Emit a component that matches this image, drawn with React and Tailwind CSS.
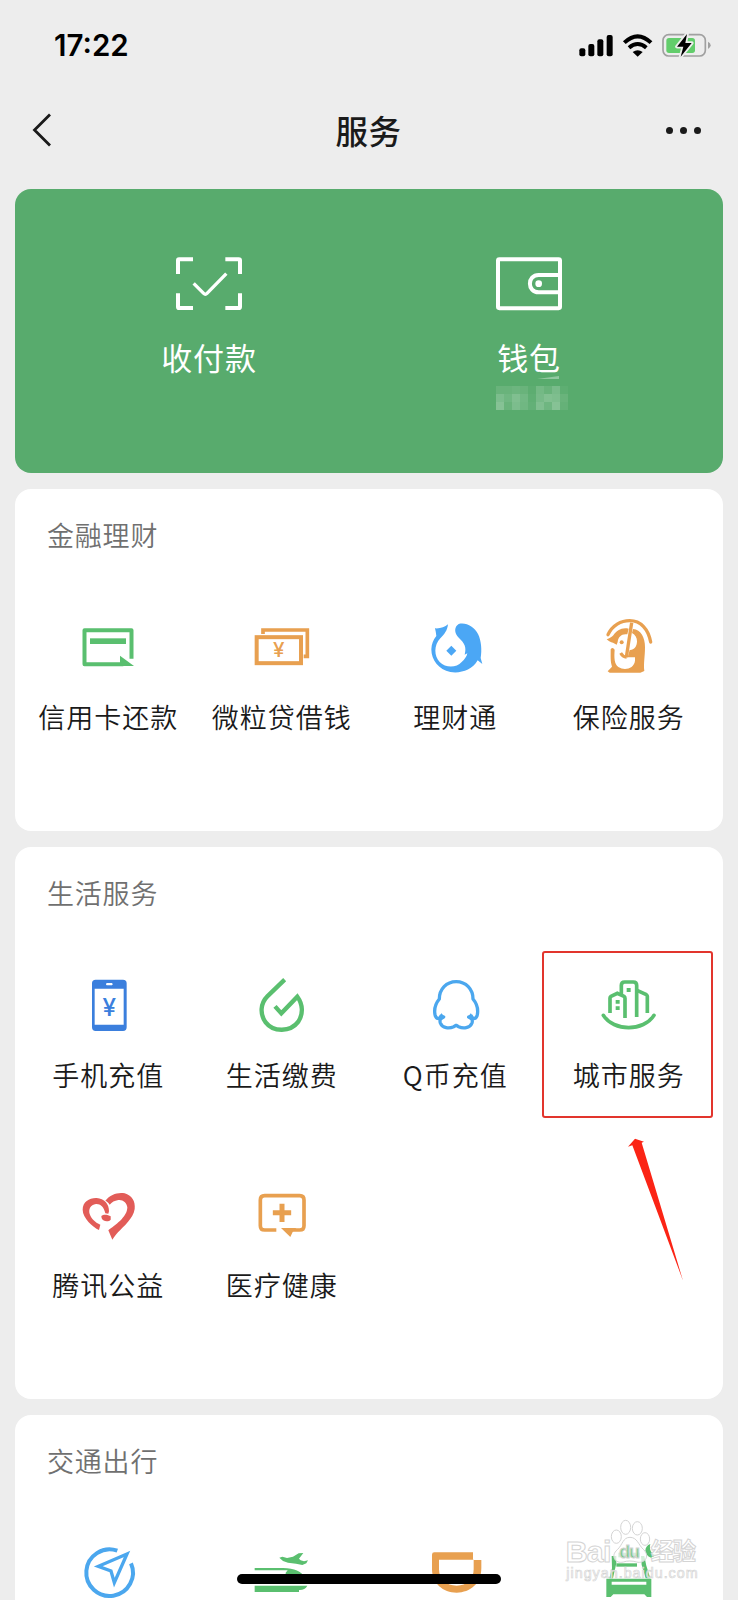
import React from 'react';

const cjk = "font-['Noto_Sans_CJK_SC',sans-serif]";

const GREEN = '#5abf6f';
const ORANGE = '#e8a050';
const BLUE = '#4ba7ee';

function Icon({ viewBox, children }) {
  return (
    <svg className="w-[60px] h-[60px]" viewBox={viewBox} fill="none">
      {children}
    </svg>
  );
}

const CreditCardIcon = () => (
  <Icon viewBox="237 441 180 180">
    <path d="M394.500 566V480.500H253.500V582.500H370" stroke={GREEN} strokeWidth="12" strokeLinejoin="round" />
    <path d="M360 557L402 588H360Z" fill={GREEN} />
    <rect x="270" y="505" width="108" height="17" fill={GREEN} />
  </Icon>
);

const LoanIcon = () => (
  <Icon viewBox="757 441 180 180">
    <path d="M790 492V480H923V559H912" stroke={ORANGE} strokeWidth="11" />
    <rect x="771" y="501.500" width="133" height="78" stroke={ORANGE} strokeWidth="12" />
    <text x="837.500" y="561" textAnchor="middle" fontSize="62" fontWeight="500" fontFamily="Inter, sans-serif" fill={ORANGE}>¥</text>
  </Icon>
);

const WealthIcon = () => (
  <Icon viewBox="77 81 180 180">
    <path
      d="M104 115C120 116 133 112 143 103C141 122 132 133 120 145C100 166 101 198 118 216C136 234 168 234 184 216C193 208 199 200 201 190L193 194C199 172 193 160 176 144C160 129 162 110 175 102C197 96 222 110 233 132C243 152 245 180 241 204L246 222L232 211C215 241 180 251 150 246C115 239 93 210 93 178C94 162 98 150 108 138C107 130 106 122 104 115Z"
      fill="#4ba7f5"
    />
    <path d="M153 167L168 182L153 197L138 182Z" fill="#4ba7f5" />
  </Icon>
);

const InsuranceIcon = () => (
  <Icon viewBox="598 81 180 180">
    <path d="M625 134C638 106 664 92 690 92C724 92 746 118 753 156" stroke={ORANGE} strokeWidth="10" strokeLinecap="round" />
    <path
      d="M621 148C630 145 636 141 641 136C651 121 667 111 687 116L683 133C667 130 655 140 654 156L651 164L640 158C633 157 627 153 621 148Z"
      fill={ORANGE}
    />
    <circle cx="666" cy="157" r="6" fill={ORANGE} />
    <path d="M696 98L680 202" stroke={ORANGE} strokeWidth="10" />
    <path d="M663 189C667 197 674 201 681 202" stroke={ORANGE} strokeWidth="9" />
    <path
      d="M700 117C724 119 736 143 736 172C736 200 731 222 734 243L722 248H630L624 244L637 230C632 214 633 200 633 178Q639 170 645 179C643 204 644 222 656 231C675 243 703 236 706 212V202H684L690 180C703 181 712 170 712 154C712 143 707 134 697 129Z"
      fill={ORANGE}
    />
  </Icon>
);

const PhoneIcon = () => (
  <Icon viewBox="146 75 180 180">
    <path
      fillRule="evenodd"
      d="M196 89H278Q289 89 289 100V232Q289 243 278 243H196Q185 243 185 232V100Q185 89 196 89ZM193 116V224H280V116ZM229 99Q225 103 229 106H245Q249 103 245 99Z"
      fill="#3b7fdd"
    />
    <text x="237" y="199" textAnchor="middle" fontSize="73" fontWeight="500" fontFamily="Inter, sans-serif" fill="#3b7fdd">¥</text>
  </Icon>
);

const BillsIcon = () => (
  <Icon viewBox="667 75 180 180">
    <path
      d="M765 89L713 139C692 160 690 193 708 217C731 247 782 247 806 215C821 192 820 163 803 140L755 190L736 169"
      stroke={GREEN}
      strokeWidth="13"
    />
  </Icon>
);

const QCoinIcon = () => (
  <Icon viewBox="77 135 180 180">
    <path
      d="M167.500 155C138 155 117 178 117 207C107 219 101 238 104 254C107 268 117 269 122 258L130 261C120 266 117 270 120 279C126 295 147 296 160 290L167.500 286L175 290C188 296 209 295 215 279C218 270 215 266 205 261L213 258C218 269 228 268 231 254C234 238 228 219 218 207C218 178 197 155 167.500 155Z"
      stroke={BLUE}
      strokeWidth="10"
      strokeLinejoin="round"
    />
    <path d="M123 249L134 263L119 268ZM212 249L201 263L216 268Z" fill={BLUE} />
  </Icon>
);

const CityIcon = () => (
  <Icon viewBox="598 135 180 180">
    <g stroke={GREEN} strokeWidth="11">
      <path d="M631 249V204Q631 201 634 199L653 190L673 199Q676 201 676 205V264" />
      <path d="M665 194V166Q665 156 675 156H701Q711 156 711 166V261" />
      <path d="M712 181L740 194Q743 196 743 199V249" />
      <path d="M611 256C642 305 732 305 763 256" strokeLinecap="round" />
    </g>
    <path d="M648 210H660V221H648ZM648 229H660V240H648ZM681 174H693V186H681Z" fill={GREEN} />
  </Icon>
);

const CharityIcon = () => (
  <Icon viewBox="146 45 180 180">
    <path
      d="M210 164L206 180C187 171 157 144 157 119C157 95 178 83 199 84C222 86 236 101 236 124L234 131L225 130C221 110 209 101 197 102C180 104 174 118 178 132C184 148 196 158 210 164Z"
      fill="#e25c58"
    />
    <path
      d="M225 92C240 74 262 66 283 70C304 76 316 94 313 117C309 145 281 168 263 187C258 193 252 200 246 209L234 181C253 166 291 142 291 112C289 97 277 88 264 90C252 92 245 96 238 104C235 98 231 95 225 92Z"
      fill="#e25c58"
    />
    <path d="M213 138C220 132 233 134 241 139V149C236 155 226 155 219 151C215 148 213 143 213 138Z" fill="#e25c58" />
  </Icon>
);

const HealthIcon = () => (
  <Icon viewBox="667 45 180 180">
    <path
      d="M740 180H705Q692 180 692 167V90Q692 77 705 77H810Q823 77 823 90V167Q823 180 810 180H788"
      stroke={ORANGE}
      strokeWidth="11"
    />
    <path d="M754 174H800L789 186L782 201Z" fill={ORANGE} />
    <path d="M757 101V156M729.500 128.500H784.500" stroke={ORANGE} strokeWidth="15" />
  </Icon>
);

const TripIcon = () => (
  <Icon viewBox="239 489 180 180">
    <path d="M354 512A70 70 0 1 0 395 550" stroke={BLUE} strokeWidth="12" />
    <path d="M383 522L297 559L335 573L345 608Z" stroke={BLUE} strokeWidth="10" />
  </Icon>
);

const TrainPlaneIcon = () => (
  <Icon viewBox="757 489 180 180">
    <path
      d="M839 533L848 530L862 534L880 530L897 520L911 519L898 536L903 541L913 544L925 541L920 550L908 555L889 551L865 548L850 543Z"
      fill={GREEN}
    />
    <path d="M765 564H850C885 564 905 575 914 590H858V578L864 571H765Z" fill={GREEN} />
    <path d="M765 617H923C918 627 908 631 898 630V636H765Z" fill={GREEN} />
  </Icon>
);

const DidiIcon = () => (
  <Icon viewBox="77 129 180 180">
    <path
      d="M95 164Q95 157 102 157H218V180H243V205C243 250 210 278 169 278C128 278 95 250 95 208ZM116 179V208C116 238 138 257 169 257C200 257 220 238 220 208V179Z"
      fillRule="evenodd"
      fill={ORANGE}
    />
  </Icon>
);

const HotelIcon = () => (
  <Icon viewBox="598 129 180 180">
    <path d="M656 172V158H720V172Z" fill={GREEN} />
    <path d="M636 168H650V190L640 235H629L637 205ZM724 168H734L740 197L752 235H738L726 195Z" fill={GREEN} />
    <path d="M650 190H712V200H650Z" fill={GREEN} />
    <path d="M620 236H755V291H742L734 283H641L633 291H620Z" fill={GREEN} />
    <path d="M636 245H740V254H636Z" fill="#fff" />
    <path d="M752 132C732 138 732 166 754 173L768 166C754 160 748 148 752 132Z" fill={GREEN} />
  </Icon>
);

const sections = [
  {
    title: '金融理财',
    items: [
      { label: '信用卡还款', icon: CreditCardIcon },
      { label: '微粒贷借钱', icon: LoanIcon },
      { label: '理财通', icon: WealthIcon },
      { label: '保险服务', icon: InsuranceIcon },
    ],
  },
  {
    title: '生活服务',
    annotated: true,
    items: [
      { label: '手机充值', icon: PhoneIcon },
      { label: '生活缴费', icon: BillsIcon },
      { label: 'Q币充值', icon: QCoinIcon },
      { label: '城市服务', icon: CityIcon },
      { label: '腾讯公益', icon: CharityIcon },
      { label: '医疗健康', icon: HealthIcon },
    ],
  },
  {
    title: '交通出行',
    items: [
      { label: '', icon: TripIcon },
      { label: '', icon: TrainPlaneIcon },
      { label: '', icon: DidiIcon },
      { label: '', icon: HotelIcon },
    ],
  },
];

function StatusBar() {
  return (
    <div className="h-[92px] flex items-center justify-between pl-[54px] pr-[27px]">
      <span className="font-['Inter',sans-serif] font-semibold text-[29.5px] leading-none text-black">17:22</span>
      <svg className="w-[132px] h-[26px]" viewBox="116 68 396 78" fill="none">
        <g fill="#000">
          <rect x="117" y="114" width="18" height="24" rx="6" />
          <rect x="144" y="101" width="18" height="37" rx="6" />
          <rect x="171" y="87" width="18" height="51" rx="6" />
          <rect x="199" y="74" width="18" height="64" rx="6" />
          <path d="M277 125Q292 114 307 125L292 139Z" />
        </g>
        <path d="M252 97Q292 59 332 97" stroke="#000" strokeWidth="12" />
        <path d="M266 112Q292 90 318 112" stroke="#000" strokeWidth="12" />
        <rect x="368" y="73" width="127" height="64" rx="17" stroke="#a0a0a0" strokeWidth="5" />
        <path d="M503 94Q511 98 511 105Q511 112 503 116Z" fill="#a0a0a0" />
        <rect x="378" y="83" width="86" height="45" rx="8" fill="#62cd6b" />
        <path
          d="M440 71L410 109H429L421 139L454 98H435Z"
          fill="#000"
          stroke="#ededed"
          strokeWidth="11"
          strokeLinejoin="round"
          paintOrder="stroke"
        />
      </svg>
    </div>
  );
}

function NavBar() {
  return (
    <div className="h-[76px] flex items-center justify-between pl-[31px] pr-[37px]">
      <svg className="w-[22px] h-[36px]" viewBox="0 0 22 36" fill="none">
        <path d="M19 2.500L3.500 18L19 33.500" stroke="#1a1a1a" strokeWidth="2.800" />
      </svg>
      <h1 className={`${cjk} font-medium text-[32.5px] leading-none tracking-[0.5px] text-[#1a1a1a] pl-[18px]`}>服务</h1>
      <div className="flex gap-[7px]">
        <span className="w-[7px] h-[7px] rounded-full bg-[#1a1a1a]" />
        <span className="w-[7px] h-[7px] rounded-full bg-[#1a1a1a]" />
        <span className="w-[7px] h-[7px] rounded-full bg-[#1a1a1a]" />
      </div>
    </div>
  );
}

// hidden balance, one number per mosaic tile (opacity in percent)
const mosaic = [
  [10, 10, 13, 10, 3, 17, 10, 20, 4],
  [22, 15, 24, 16, 5, 19, 25, 23, 10],
  [28, 10, 22, 15, 7, 24, 14, 28, 8],
];

function PayCard() {
  return (
    <div className="h-[284px] rounded-[16px] bg-[#58ab6d] flex px-[34px] pt-[65px] text-white">
      <div className="w-[320px] flex flex-col items-center">
        <svg className="w-[72px] h-[60px]" viewBox="99 42 216 180" fill="none" stroke="#fff" strokeWidth="12">
          <path d="M159 58H117Q114 58 114 61V102M256 58H296Q300 58 300 61V102M114 160V200Q114 204 117 204H159M300 160V200Q300 204 296 204H256" />
          <path d="M161 130L191 160Q196 165 201 160L259 101" strokeWidth="10" />
        </svg>
        <span className={`${cjk} text-[31px] leading-[40px] tracking-[0.8px] mt-[23px]`}>收付款</span>
      </div>
      <div className="w-[320px] flex flex-col items-center">
        <svg className="w-[72px] h-[60px]" viewBox="99 42 216 180" fill="none" stroke="#fff" strokeWidth="12">
          <rect x="114" y="57.500" width="186" height="147" rx="4" />
          <path d="M300 105H236C201 105 201 157 236 157H300" />
          <circle cx="236" cy="131" r="10" fill="#fff" stroke="none" />
        </svg>
        <span className={`${cjk} text-[31px] leading-[40px] tracking-[0.8px] mt-[23px]`}>钱包</span>
        <svg className="w-[72px] h-[36px] ml-[5px] -mt-[2px]" viewBox="0 0 72 36" fill="#fff">
          <path d="M41 4L63 1V4Z" opacity="0.35" />
          {mosaic.map((row, y) =>
            row.map((o, x) => <rect key={`${x}-${y}`} x={x * 8} y={11 + y * 8} width="8" height="8" opacity={o / 100} />)
          )}
        </svg>
      </div>
    </div>
  );
}

function Annotation() {
  return (
    <>
      <div className="absolute left-[527px] top-[104px] w-[171px] h-[167px] border-2 border-[#e2352d] rounded-[3px]" />
      <svg className="absolute left-[585px] top-[273px] w-[138px] h-[180px]" viewBox="0 0 414 540">
        <path d="M105 56L132 65L125 68L249 482L97 76L84 80Z" fill="#fb2415" />
      </svg>
    </>
  );
}

function Section({ section }) {
  return (
    <section className="relative shrink-0 bg-white rounded-[16px] px-[7px] pb-[40px]">
      <h2 className={`${cjk} h-[92px] flex items-center pl-[25px] font-[350] text-[27px] tracking-[0.8px] text-[#707070]`}>
        {section.title}
      </h2>
      <div className="grid grid-cols-4">
        {section.items.map(({ label, icon: ItemIcon }, i) => (
          <div key={i} className="h-[210px] pt-[36px] flex flex-col items-center">
            <ItemIcon />
            <span className={`${cjk} mt-[20px] mr-px font-[350] text-[27px] leading-[40px] tracking-[1px] text-[#1a1a1a] whitespace-nowrap`}>
              {label}
            </span>
          </div>
        ))}
      </div>
      {section.annotated && <Annotation />}
    </section>
  );
}

function Watermark() {
  return (
    <svg className="absolute left-[560px] top-[1515px] w-[145px] h-[75px]" viewBox="480 45 435 225">
      <g fill="#fff" fillOpacity="0.75" stroke="#d4d4d4" strokeWidth="3">
        <text x="497" y="185" fontSize="91" fontWeight="700" fontFamily="Liberation Sans, sans-serif" textLength="137">Bai</text>
        <text x="752" y="181" fontSize="70" fontWeight="700" fontFamily="Noto Sans CJK SC, sans-serif" textLength="136">经验</text>
        <ellipse cx="649" cy="110" rx="15" ry="20" />
        <ellipse cx="677" cy="82" rx="15" ry="21" />
        <ellipse cx="712" cy="85" rx="15" ry="20" />
        <ellipse cx="735" cy="117" rx="14" ry="19" />
        <path d="M690 112C712 112 715 135 731 149C752 170 732 192 710 186C696 182 682 182 670 186C646 192 630 168 652 149C668 135 668 112 690 112Z" />
        <text x="658" y="173" fontSize="54" fontWeight="700" fontFamily="Liberation Sans, sans-serif" textLength="62" fill={GREEN}>du</text>
        <text x="499" y="234" fontSize="43" fontFamily="Liberation Sans, sans-serif" textLength="394" strokeWidth="2">jingyan.baidu.com</text>
      </g>
    </svg>
  );
}

export default function App() {
  return (
    <div className="relative w-[738px] h-[1600px] overflow-hidden bg-[#ededed]">
      <StatusBar />
      <NavBar />
      <main className="mt-[21px] mx-[15px] flex flex-col gap-4">
        <PayCard />
        {sections.map((section) => (
          <Section key={section.title} section={section} />
        ))}
      </main>
      <Watermark />
      {/* Home indicator */}
      <div className="absolute left-[237px] top-[1574px] w-[264px] h-[10px] rounded-full bg-black" />
    </div>
  );
}
